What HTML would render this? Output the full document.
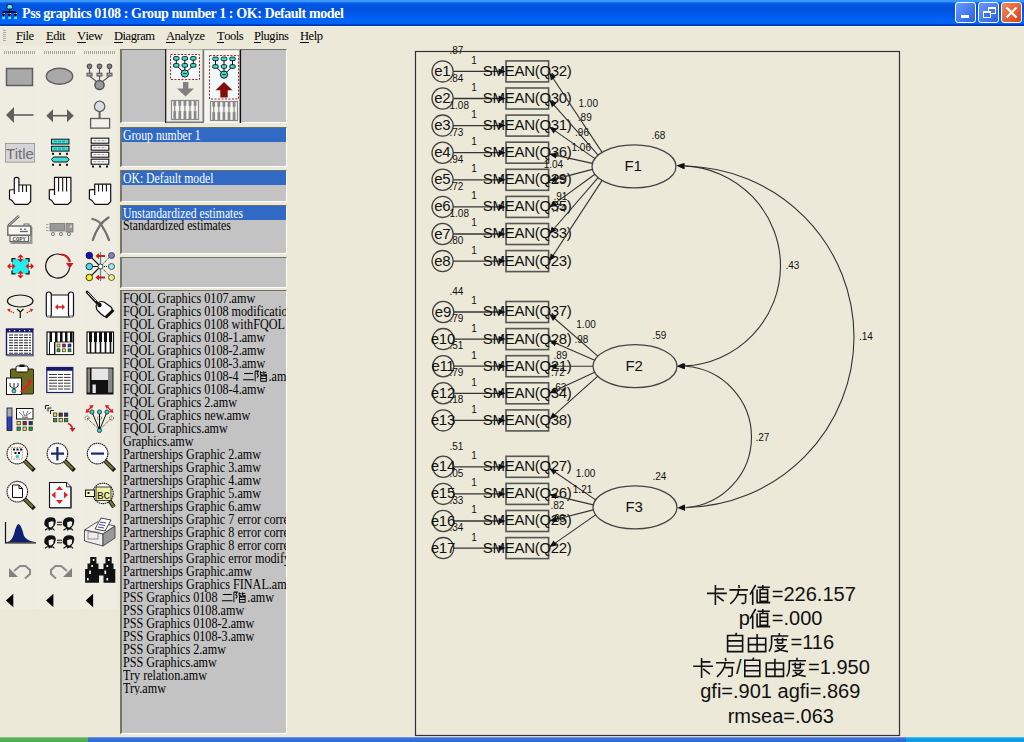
<!DOCTYPE html>
<html><head><meta charset="utf-8"><style>
*{margin:0;padding:0;box-sizing:border-box}
html,body{width:1024px;height:742px;overflow:hidden;background:#ECE9D8;font-family:"Liberation Sans",sans-serif}
.abs{position:absolute}
#title{left:0;top:0;width:1024px;height:26px;background:linear-gradient(#3D9CFF 0px,#3A95FF 1.5px,#0A5FE6 3px,#0055E2 5px,#0053DF 10px,#005AEE 16px,#0066F8 21px,#0062F2 23.5px,#0036B8 25px,#0030A8 26px)}
#title .t{position:absolute;left:22px;top:6px;color:#fff;font:bold 14px "Liberation Serif",serif;white-space:nowrap;letter-spacing:-0.42px}
.wb{position:absolute;top:2px;width:21px;height:21px;border:1px solid #fff;border-radius:3px}
#menu{left:0;top:26px;width:1024px;height:20px;background:linear-gradient(#F2F2FA 0,#F2F2FA 1px,#ECE9D8 1px)}
#menu span{position:absolute;top:3px;font:12.5px "Liberation Serif",serif;color:#000;letter-spacing:-0.45px;line-height:14px}
#menu u{text-decoration:none;border-bottom:1px solid #000;display:inline-block;line-height:12px}
.pnl{position:absolute;left:120px;width:167px;background:#C3C3C3;border-top:1px solid #6e6e62;border-left:2px solid #76766a;border-right:1px solid #fff;border-bottom:1px solid #fff;overflow:hidden}
.hdr{background:#316AC5;color:#fff;height:14px;font:14.3px "Liberation Serif",serif;padding-left:1px;line-height:14px;white-space:nowrap}
.itm{height:14px;font:14.3px "Liberation Serif",serif;padding-left:1px;line-height:11px;white-space:nowrap;color:#000}
.sx{display:inline-block;transform:scaleX(0.82);transform-origin:0 0}
#files .sx{transform:scaleX(0.85)}
#files{font:14.3px "Liberation Serif",serif;line-height:13px;padding-left:1px;padding-top:1px;white-space:nowrap;overflow:hidden}
svg text.big{font:15px "Liberation Sans",sans-serif;fill:#111;letter-spacing:-0.3px}
svg text.sm{font:10px "Liberation Sans",sans-serif;fill:#111}
svg text.st{font:20px "Liberation Sans",sans-serif;fill:#111}
</style></head><body>
<div id="title" class="abs"><svg width="20" height="22" style="position:absolute;left:0;top:0"><rect x="7" y="4.5" width="5.5" height="4.5" rx="1.5" fill="#60e8f0" stroke="#001" stroke-width="0.8"/><path d="M9.7,9 V12 M3.4,12 H15.6 M3.4,12 V18 M9.4,12 V18 M15.4,12 V18" stroke="#001" stroke-width="1.3"/><g fill="#001"><rect x="2" y="12" width="3" height="3"/><rect x="8" y="12" width="3" height="3"/><rect x="14" y="12" width="3" height="3"/></g><g fill="#70e0f8"><rect x="2.2" y="16.5" width="2.8" height="2.6"/><rect x="8.2" y="16.5" width="2.8" height="2.6"/><rect x="14.2" y="16.5" width="2.8" height="2.6"/></g><g fill="#ddd"><rect x="2.5" y="13" width="1" height="1"/><rect x="4" y="13" width="1" height="1"/><rect x="8.5" y="13" width="1" height="1"/><rect x="10" y="13" width="1" height="1"/><rect x="14.5" y="13" width="1" height="1"/><rect x="16" y="13" width="1" height="1"/></g></svg><div class="t">Pss graphics 0108 : Group number 1 : OK: Default model</div>
<div class="wb" style="left:955px;background:linear-gradient(135deg,#6A9BFF,#2A5FE0)"><div style="position:absolute;left:5px;top:12px;width:8px;height:3px;background:#fff"></div></div>
<div class="wb" style="left:978px;background:linear-gradient(135deg,#6A9BFF,#2A5FE0)"><div style="position:absolute;left:9px;top:4px;width:8px;height:7px;border:1px solid #fff;border-top-width:2px"></div><div style="position:absolute;left:4px;top:8px;width:8px;height:7px;border:1px solid #fff;border-top-width:2px;background:#3D70E8"></div></div>
<div class="wb" style="left:1001px;background:linear-gradient(135deg,#F08A5A,#D8421A)"><svg width="19" height="19" style="position:absolute;left:0;top:0"><path d="M4.5,4.5 L14.5,14.5 M14.5,4.5 L4.5,14.5" stroke="#fff" stroke-width="2.2"/></svg></div>
</div>
<div id="menu" class="abs">
<div style="position:absolute;left:3px;top:4px;width:3px;height:12px;background:repeating-linear-gradient(#aaa 0 1px,transparent 1px 2px)"></div>
<span style="left:16px"><u>F</u>ile</span><span style="left:46px"><u>E</u>dit</span><span style="left:77px"><u>V</u>iew</span><span style="left:114px"><u>D</u>iagram</span><span style="left:166px"><u>A</u>nalyze</span><span style="left:217px"><u>T</u>ools</span><span style="left:254px"><u>P</u>lugins</span><span style="left:300px"><u>H</u>elp</span>
</div>
<div class="pnl" style="top:49px;height:74px"></div>
<div class="pnl" style="top:127px;height:40px"><div class="hdr"><span class="sx">Group number 1</span></div></div>
<div class="pnl" style="top:170px;height:32px"><div class="hdr"><span class="sx">OK: Default model</span></div></div>
<div class="pnl" style="top:205px;height:49px"><div class="hdr"><span class="sx">Unstandardized estimates</span></div><div class="itm"><span class="sx">Standardized estimates</span></div></div>
<div class="pnl" style="top:257px;height:31px"></div>
<div class="pnl" style="top:290px;height:444px"><div id="files"><div style="height:13px"><span class="sx">FQOL Graphics 0107.amw</span></div><div style="height:13px"><span class="sx">FQOL Graphics 0108 modificatio</span></div><div style="height:13px"><span class="sx">FQOL Graphics 0108 withFQOL</span></div><div style="height:13px"><span class="sx">FQOL Graphics 0108-1.amw</span></div><div style="height:13px"><span class="sx">FQOL Graphics 0108-2.amw</span></div><div style="height:13px"><span class="sx">FQOL Graphics 0108-3.amw</span></div><div style="height:13px"><span class="sx">FQOL Graphics 0108-4 <svg width="31.5" height="12" style="vertical-align:top;margin-top:0" viewBox="0 0 26.8 12" preserveAspectRatio="none"><path transform="translate(1.2,1.8) scale(0.53,0.48)" d="M1.5,3.5 H18.5 M0,16.5 H20" fill="none" stroke="#000" stroke-width="1.1" vector-effect="non-scaling-stroke" stroke-linecap="butt"/><path transform="translate(12.5,0.6) scale(0.66,0.53)" d="M1,1 V20 M1,1 H6 L4,6 Q7,9 5,12 H3.5 M9,1 V7 Q9,8 12,8 M9,4 H12.5 M14,1 V7 Q14,8 19,8 M14,4.5 L18,3 M9.5,10 H18 V20 H9.5 Z M9.5,15 H18 M13,8.5 L12,10" fill="none" stroke="#000" stroke-width="1.1" vector-effect="non-scaling-stroke" stroke-linecap="butt"/></svg>.am</span></div><div style="height:13px"><span class="sx">FQOL Graphics 0108-4.amw</span></div><div style="height:13px"><span class="sx">FQOL Graphics 2.amw</span></div><div style="height:13px"><span class="sx">FQOL Graphics new.amw</span></div><div style="height:13px"><span class="sx">FQOL Graphics.amw</span></div><div style="height:13px"><span class="sx">Graphics.amw</span></div><div style="height:13px"><span class="sx">Partnerships Graphic 2.amw</span></div><div style="height:13px"><span class="sx">Partnerships Graphic 3.amw</span></div><div style="height:13px"><span class="sx">Partnerships Graphic 4.amw</span></div><div style="height:13px"><span class="sx">Partnerships Graphic 5.amw</span></div><div style="height:13px"><span class="sx">Partnerships Graphic 6.amw</span></div><div style="height:13px"><span class="sx">Partnerships Graphic 7 error corre</span></div><div style="height:13px"><span class="sx">Partnerships Graphic 8 error corre</span></div><div style="height:13px"><span class="sx">Partnerships Graphic 8 error corre</span></div><div style="height:13px"><span class="sx">Partnerships Graphic error modify</span></div><div style="height:13px"><span class="sx">Partnerships Graphic.amw</span></div><div style="height:13px"><span class="sx">Partnerships Graphics FINAL.am</span></div><div style="height:13px"><span class="sx">PSS Graphics 0108 <svg width="31.5" height="12" style="vertical-align:top;margin-top:0" viewBox="0 0 26.8 12" preserveAspectRatio="none"><path transform="translate(1.2,1.8) scale(0.53,0.48)" d="M1.5,3.5 H18.5 M0,16.5 H20" fill="none" stroke="#000" stroke-width="1.1" vector-effect="non-scaling-stroke" stroke-linecap="butt"/><path transform="translate(12.5,0.6) scale(0.66,0.53)" d="M1,1 V20 M1,1 H6 L4,6 Q7,9 5,12 H3.5 M9,1 V7 Q9,8 12,8 M9,4 H12.5 M14,1 V7 Q14,8 19,8 M14,4.5 L18,3 M9.5,10 H18 V20 H9.5 Z M9.5,15 H18 M13,8.5 L12,10" fill="none" stroke="#000" stroke-width="1.1" vector-effect="non-scaling-stroke" stroke-linecap="butt"/></svg>.amw</span></div><div style="height:13px"><span class="sx">PSS Graphics 0108.amw</span></div><div style="height:13px"><span class="sx">PSS Graphics 0108-2.amw</span></div><div style="height:13px"><span class="sx">PSS Graphics 0108-3.amw</span></div><div style="height:13px"><span class="sx">PSS Graphics 2.amw</span></div><div style="height:13px"><span class="sx">PSS Graphics.amw</span></div><div style="height:13px"><span class="sx">Try relation.amw</span></div><div style="height:13px"><span class="sx">Try.amw</span></div></div></div>
<svg class="abs" style="left:0;top:0" width="1024" height="742" viewBox="0 0 1024 742">
<rect x="415.5" y="51.5" width="484" height="684" fill="none" stroke="#333" stroke-width="1.2"/>
<circle cx="442.6" cy="71.4" r="10.6" fill="none" stroke="#444" stroke-width="1.3"/>
<text x="442.3" y="75.9" class="big" text-anchor="middle">e1</text>
<line x1="453.20000000000005" y1="71.4" x2="499" y2="71.4" stroke="#333" stroke-width="1.3"/>
<rect x="506" y="60.9" width="42.6" height="21" fill="none" stroke="#555" stroke-width="1.6"/>
<text x="527.2" y="75.8" class="big" text-anchor="middle">SMEAN(Q32)</text>
<polygon points="505.8,71.4 498.6,74.4 498.6,68.4" fill="#111"/>
<text x="474" y="63.8" class="sm" text-anchor="middle">1</text>
<text x="449.5" y="54.4" class="sm">.87</text>
<circle cx="442.6" cy="98.5" r="10.6" fill="none" stroke="#444" stroke-width="1.3"/>
<text x="442.3" y="103.0" class="big" text-anchor="middle">e2</text>
<line x1="453.20000000000005" y1="98.5" x2="499" y2="98.5" stroke="#333" stroke-width="1.3"/>
<rect x="506" y="88.0" width="42.6" height="21" fill="none" stroke="#555" stroke-width="1.6"/>
<text x="527.2" y="102.9" class="big" text-anchor="middle">SMEAN(Q30)</text>
<polygon points="505.8,98.5 498.6,101.5 498.6,95.5" fill="#111"/>
<text x="474" y="90.9" class="sm" text-anchor="middle">1</text>
<text x="449.5" y="81.5" class="sm">.84</text>
<circle cx="442.6" cy="125.6" r="10.6" fill="none" stroke="#444" stroke-width="1.3"/>
<text x="442.3" y="130.1" class="big" text-anchor="middle">e3</text>
<line x1="453.20000000000005" y1="125.6" x2="499" y2="125.6" stroke="#333" stroke-width="1.3"/>
<rect x="506" y="115.1" width="42.6" height="21" fill="none" stroke="#555" stroke-width="1.6"/>
<text x="527.2" y="130.0" class="big" text-anchor="middle">SMEAN(Q31)</text>
<polygon points="505.8,125.6 498.6,128.6 498.6,122.6" fill="#111"/>
<text x="474" y="118.0" class="sm" text-anchor="middle">1</text>
<text x="449.5" y="108.6" class="sm">1.08</text>
<circle cx="442.6" cy="152.7" r="10.6" fill="none" stroke="#444" stroke-width="1.3"/>
<text x="442.3" y="157.2" class="big" text-anchor="middle">e4</text>
<line x1="453.20000000000005" y1="152.7" x2="499" y2="152.7" stroke="#333" stroke-width="1.3"/>
<rect x="506" y="142.2" width="42.6" height="21" fill="none" stroke="#555" stroke-width="1.6"/>
<text x="527.2" y="157.1" class="big" text-anchor="middle">SMEAN(Q36)</text>
<polygon points="505.8,152.7 498.6,155.7 498.6,149.7" fill="#111"/>
<text x="474" y="145.1" class="sm" text-anchor="middle">1</text>
<text x="449.5" y="135.7" class="sm">.73</text>
<circle cx="442.6" cy="179.8" r="10.6" fill="none" stroke="#444" stroke-width="1.3"/>
<text x="442.3" y="184.3" class="big" text-anchor="middle">e5</text>
<line x1="453.20000000000005" y1="179.8" x2="499" y2="179.8" stroke="#333" stroke-width="1.3"/>
<rect x="506" y="169.3" width="42.6" height="21" fill="none" stroke="#555" stroke-width="1.6"/>
<text x="527.2" y="184.2" class="big" text-anchor="middle">SMEAN(Q29)</text>
<polygon points="505.8,179.8 498.6,182.8 498.6,176.8" fill="#111"/>
<text x="474" y="172.2" class="sm" text-anchor="middle">1</text>
<text x="449.5" y="162.8" class="sm">.94</text>
<circle cx="442.6" cy="206.9" r="10.6" fill="none" stroke="#444" stroke-width="1.3"/>
<text x="442.3" y="211.4" class="big" text-anchor="middle">e6</text>
<line x1="453.20000000000005" y1="206.9" x2="499" y2="206.9" stroke="#333" stroke-width="1.3"/>
<rect x="506" y="196.4" width="42.6" height="21" fill="none" stroke="#555" stroke-width="1.6"/>
<text x="527.2" y="211.3" class="big" text-anchor="middle">SMEAN(Q35)</text>
<polygon points="505.8,206.9 498.6,209.9 498.6,203.9" fill="#111"/>
<text x="474" y="199.3" class="sm" text-anchor="middle">1</text>
<text x="449.5" y="189.9" class="sm">.72</text>
<circle cx="442.6" cy="234.0" r="10.6" fill="none" stroke="#444" stroke-width="1.3"/>
<text x="442.3" y="238.5" class="big" text-anchor="middle">e7</text>
<line x1="453.20000000000005" y1="234.0" x2="499" y2="234.0" stroke="#333" stroke-width="1.3"/>
<rect x="506" y="223.5" width="42.6" height="21" fill="none" stroke="#555" stroke-width="1.6"/>
<text x="527.2" y="238.4" class="big" text-anchor="middle">SMEAN(Q33)</text>
<polygon points="505.8,234.0 498.6,237.0 498.6,231.0" fill="#111"/>
<text x="474" y="226.4" class="sm" text-anchor="middle">1</text>
<text x="449.5" y="217.0" class="sm">1.08</text>
<circle cx="442.6" cy="261.1" r="10.6" fill="none" stroke="#444" stroke-width="1.3"/>
<text x="442.3" y="265.6" class="big" text-anchor="middle">e8</text>
<line x1="453.20000000000005" y1="261.1" x2="499" y2="261.1" stroke="#333" stroke-width="1.3"/>
<rect x="506" y="250.6" width="42.6" height="21" fill="none" stroke="#555" stroke-width="1.6"/>
<text x="527.2" y="265.5" class="big" text-anchor="middle">SMEAN(Q23)</text>
<polygon points="505.8,261.1 498.6,264.1 498.6,258.1" fill="#111"/>
<text x="474" y="253.5" class="sm" text-anchor="middle">1</text>
<text x="449.5" y="244.1" class="sm">.80</text>
<circle cx="443.2" cy="312.0" r="10.6" fill="none" stroke="#444" stroke-width="1.3"/>
<text x="442.9" y="316.5" class="big" text-anchor="middle">e9</text>
<line x1="453.8" y1="312.0" x2="499" y2="312.0" stroke="#333" stroke-width="1.3"/>
<rect x="506" y="301.5" width="42.6" height="21" fill="none" stroke="#555" stroke-width="1.6"/>
<text x="527.2" y="316.4" class="big" text-anchor="middle">SMEAN(Q37)</text>
<polygon points="505.8,312.0 498.6,315.0 498.6,309.0" fill="#111"/>
<text x="474" y="304.4" class="sm" text-anchor="middle">1</text>
<text x="449.5" y="295.0" class="sm">.44</text>
<circle cx="443.2" cy="339.1" r="10.6" fill="none" stroke="#444" stroke-width="1.3"/>
<text x="442.9" y="343.6" class="big" text-anchor="middle">e10</text>
<line x1="453.8" y1="339.1" x2="499" y2="339.1" stroke="#333" stroke-width="1.3"/>
<rect x="506" y="328.6" width="42.6" height="21" fill="none" stroke="#555" stroke-width="1.6"/>
<text x="527.2" y="343.5" class="big" text-anchor="middle">SMEAN(Q28)</text>
<polygon points="505.8,339.1 498.6,342.1 498.6,336.1" fill="#111"/>
<text x="474" y="331.5" class="sm" text-anchor="middle">1</text>
<text x="449.5" y="322.1" class="sm">.79</text>
<circle cx="443.2" cy="366.2" r="10.6" fill="none" stroke="#444" stroke-width="1.3"/>
<text x="442.9" y="370.7" class="big" text-anchor="middle">e11</text>
<line x1="453.8" y1="366.2" x2="499" y2="366.2" stroke="#333" stroke-width="1.3"/>
<rect x="506" y="355.7" width="42.6" height="21" fill="none" stroke="#555" stroke-width="1.6"/>
<text x="527.2" y="370.6" class="big" text-anchor="middle">SMEAN(Q21)</text>
<polygon points="505.8,366.2 498.6,369.2 498.6,363.2" fill="#111"/>
<text x="474" y="358.6" class="sm" text-anchor="middle">1</text>
<text x="449.5" y="349.2" class="sm">.51</text>
<circle cx="443.2" cy="393.3" r="10.6" fill="none" stroke="#444" stroke-width="1.3"/>
<text x="442.9" y="397.8" class="big" text-anchor="middle">e12</text>
<line x1="453.8" y1="393.3" x2="499" y2="393.3" stroke="#333" stroke-width="1.3"/>
<rect x="506" y="382.8" width="42.6" height="21" fill="none" stroke="#555" stroke-width="1.6"/>
<text x="527.2" y="397.7" class="big" text-anchor="middle">SMEAN(Q34)</text>
<polygon points="505.8,393.3 498.6,396.3 498.6,390.3" fill="#111"/>
<text x="474" y="385.7" class="sm" text-anchor="middle">1</text>
<text x="449.5" y="376.3" class="sm">.79</text>
<circle cx="443.2" cy="420.4" r="10.6" fill="none" stroke="#444" stroke-width="1.3"/>
<text x="442.9" y="424.9" class="big" text-anchor="middle">e13</text>
<line x1="453.8" y1="420.4" x2="499" y2="420.4" stroke="#333" stroke-width="1.3"/>
<rect x="506" y="409.9" width="42.6" height="21" fill="none" stroke="#555" stroke-width="1.6"/>
<text x="527.2" y="424.8" class="big" text-anchor="middle">SMEAN(Q38)</text>
<polygon points="505.8,420.4 498.6,423.4 498.6,417.4" fill="#111"/>
<text x="474" y="412.8" class="sm" text-anchor="middle">1</text>
<text x="449.5" y="403.4" class="sm">.18</text>
<circle cx="443.2" cy="466.8" r="10.6" fill="none" stroke="#444" stroke-width="1.3"/>
<text x="442.9" y="471.3" class="big" text-anchor="middle">e14</text>
<line x1="453.8" y1="466.8" x2="499" y2="466.8" stroke="#333" stroke-width="1.3"/>
<rect x="506" y="456.3" width="42.6" height="21" fill="none" stroke="#555" stroke-width="1.6"/>
<text x="527.2" y="471.2" class="big" text-anchor="middle">SMEAN(Q27)</text>
<polygon points="505.8,466.8 498.6,469.8 498.6,463.8" fill="#111"/>
<text x="474" y="459.2" class="sm" text-anchor="middle">1</text>
<text x="449.5" y="449.8" class="sm">.51</text>
<circle cx="443.2" cy="493.9" r="10.6" fill="none" stroke="#444" stroke-width="1.3"/>
<text x="442.9" y="498.4" class="big" text-anchor="middle">e15</text>
<line x1="453.8" y1="493.9" x2="499" y2="493.9" stroke="#333" stroke-width="1.3"/>
<rect x="506" y="483.4" width="42.6" height="21" fill="none" stroke="#555" stroke-width="1.6"/>
<text x="527.2" y="498.3" class="big" text-anchor="middle">SMEAN(Q26)</text>
<polygon points="505.8,493.9 498.6,496.9 498.6,490.9" fill="#111"/>
<text x="474" y="486.3" class="sm" text-anchor="middle">1</text>
<text x="449.5" y="476.9" class="sm">.05</text>
<circle cx="443.2" cy="521.0" r="10.6" fill="none" stroke="#444" stroke-width="1.3"/>
<text x="442.9" y="525.5" class="big" text-anchor="middle">e16</text>
<line x1="453.8" y1="521.0" x2="499" y2="521.0" stroke="#333" stroke-width="1.3"/>
<rect x="506" y="510.5" width="42.6" height="21" fill="none" stroke="#555" stroke-width="1.6"/>
<text x="527.2" y="525.4" class="big" text-anchor="middle">SMEAN(Q25)</text>
<polygon points="505.8,521.0 498.6,524.0 498.6,518.0" fill="#111"/>
<text x="474" y="513.4" class="sm" text-anchor="middle">1</text>
<text x="449.5" y="504.0" class="sm">.33</text>
<circle cx="443.2" cy="548.1" r="10.6" fill="none" stroke="#444" stroke-width="1.3"/>
<text x="442.9" y="552.6" class="big" text-anchor="middle">e17</text>
<line x1="453.8" y1="548.1" x2="499" y2="548.1" stroke="#333" stroke-width="1.3"/>
<rect x="506" y="537.6" width="42.6" height="21" fill="none" stroke="#555" stroke-width="1.6"/>
<text x="527.2" y="552.5" class="big" text-anchor="middle">SMEAN(Q22)</text>
<polygon points="505.8,548.1 498.6,551.1 498.6,545.1" fill="#111"/>
<text x="474" y="540.5" class="sm" text-anchor="middle">1</text>
<text x="449.5" y="531.1" class="sm">.34</text>
<ellipse cx="634" cy="166.4" rx="42" ry="21.5" fill="none" stroke="#444" stroke-width="1.3"/>
<text x="633" y="170.9" class="big" text-anchor="middle">F1</text>
<text x="651.5" y="139.4" class="sm">.68</text>
<ellipse cx="635" cy="366.2" rx="42" ry="21.5" fill="none" stroke="#444" stroke-width="1.3"/>
<text x="634" y="370.7" class="big" text-anchor="middle">F2</text>
<text x="652.5" y="339.2" class="sm">.59</text>
<ellipse cx="635" cy="507.4" rx="42" ry="21.5" fill="none" stroke="#444" stroke-width="1.3"/>
<text x="634" y="511.9" class="big" text-anchor="middle">F3</text>
<text x="652.5" y="480.4" class="sm">.24</text>
<line x1="602.1" y1="152.4" x2="549.4" y2="72.7" stroke="#333" stroke-width="1.1"/>
<polygon points="549.4,72.7 555.9,77.0 550.9,80.4" fill="#111"/>
<line x1="598.1" y1="155.2" x2="549.4" y2="99.8" stroke="#333" stroke-width="1.1"/>
<polygon points="549.4,99.8 556.4,103.2 551.9,107.2" fill="#111"/>
<line x1="594.9" y1="158.6" x2="549.4" y2="126.9" stroke="#333" stroke-width="1.1"/>
<polygon points="549.4,126.9 557.0,128.6 553.6,133.5" fill="#111"/>
<line x1="592.4" y1="163.4" x2="549.4" y2="153.9" stroke="#333" stroke-width="1.1"/>
<polygon points="549.4,153.9 557.1,152.5 555.8,158.4" fill="#111"/>
<line x1="592.4" y1="169.4" x2="549.4" y2="180.6" stroke="#333" stroke-width="1.1"/>
<polygon points="549.4,180.6 555.6,175.9 557.1,181.7" fill="#111"/>
<line x1="594.9" y1="174.2" x2="549.4" y2="207.4" stroke="#333" stroke-width="1.1"/>
<polygon points="549.4,207.4 553.4,200.7 557.0,205.6" fill="#111"/>
<line x1="598.1" y1="177.6" x2="549.4" y2="234.0" stroke="#333" stroke-width="1.1"/>
<polygon points="549.4,234.0 551.8,226.6 556.4,230.5" fill="#111"/>
<line x1="602.1" y1="180.4" x2="549.4" y2="261.1" stroke="#333" stroke-width="1.1"/>
<polygon points="549.4,261.1 550.8,253.4 555.8,256.7" fill="#111"/>
<line x1="597.8" y1="356.2" x2="549.4" y2="314.0" stroke="#333" stroke-width="1.1"/>
<polygon points="549.4,314.0 556.8,316.5 552.9,321.0" fill="#111"/>
<line x1="594.7" y1="360.2" x2="549.4" y2="340.6" stroke="#333" stroke-width="1.1"/>
<polygon points="549.4,340.6 557.2,340.7 554.8,346.2" fill="#111"/>
<line x1="593.0" y1="366.2" x2="549.4" y2="366.2" stroke="#333" stroke-width="1.1"/>
<polygon points="549.4,366.2 556.6,363.2 556.6,369.2" fill="#111"/>
<line x1="594.7" y1="372.2" x2="549.4" y2="393.3" stroke="#333" stroke-width="1.1"/>
<polygon points="549.4,393.3 554.7,387.5 557.2,393.0" fill="#111"/>
<line x1="597.8" y1="376.2" x2="549.4" y2="419.4" stroke="#333" stroke-width="1.1"/>
<polygon points="549.4,419.4 552.8,412.4 556.8,416.8" fill="#111"/>
<line x1="595.6" y1="499.9" x2="549.4" y2="468.3" stroke="#333" stroke-width="1.1"/>
<polygon points="549.4,468.3 557.0,469.9 553.7,474.8" fill="#111"/>
<line x1="593.3" y1="504.9" x2="549.4" y2="494.4" stroke="#333" stroke-width="1.1"/>
<polygon points="549.4,494.4 557.1,493.2 555.7,499.0" fill="#111"/>
<line x1="593.3" y1="509.9" x2="549.4" y2="521.0" stroke="#333" stroke-width="1.1"/>
<polygon points="549.4,521.0 555.6,516.3 557.1,522.1" fill="#111"/>
<line x1="595.6" y1="514.9" x2="549.4" y2="547.1" stroke="#333" stroke-width="1.1"/>
<polygon points="549.4,547.1 553.6,540.5 557.0,545.4" fill="#111"/>
<text x="578.5" y="106.5" class="sm">1.00</text>
<text x="577.8" y="120.8" class="sm">.89</text>
<text x="575.1" y="135.6" class="sm">.96</text>
<text x="571.5" y="150.6" class="sm">1.06</text>
<text x="543.7" y="167.5" class="sm">1.04</text>
<text x="545.5" y="183" class="sm">1.25</text>
<text x="553.4" y="200.3" class="sm">.91</text>
<text x="552.1" y="212.4" class="sm">.74</text>
<text x="576.3" y="328" class="sm">1.00</text>
<text x="574.5" y="342.9" class="sm">.98</text>
<text x="553.5" y="358.7" class="sm">.89</text>
<text x="550.9" y="376.2" class="sm">.72</text>
<text x="552.5" y="391" class="sm">.63</text>
<text x="575.8" y="476.7" class="sm">1.00</text>
<text x="572.8" y="493" class="sm">1.21</text>
<text x="550.5" y="508.5" class="sm">.82</text>
<text x="551.5" y="522" class="sm">.93</text>
<path d="M780.5,265.9 A100.4,100.4 0 0 0 684.5,165.9" fill="none" stroke="#333" stroke-width="1.1"/>
<path d="M780.5,265.9 A100.4,100.4 0 0 1 684.5,365.9" fill="none" stroke="#333" stroke-width="1.1"/>
<polygon points="676.5,165.6 683.8,162.9 683.6,168.9" fill="#111"/>
<polygon points="676.5,366.2 683.6,362.9 683.8,368.9" fill="#111"/>
<path d="M854.0,336.9 A171.0,171.0 0 0 0 685.5,166.3" fill="none" stroke="#333" stroke-width="1.1"/>
<path d="M854.0,336.9 A171.0,171.0 0 0 1 685.5,507.5" fill="none" stroke="#333" stroke-width="1.1"/>
<polygon points="677.5,166.0 684.8,163.3 684.6,169.3" fill="#111"/>
<polygon points="677.5,507.8 684.6,504.5 684.8,510.5" fill="#111"/>
<path d="M751.5,437.0 A71.0,71.0 0 0 0 685.8,366.3" fill="none" stroke="#333" stroke-width="1.1"/>
<path d="M751.5,437.0 A71.0,71.0 0 0 1 685.8,507.7" fill="none" stroke="#333" stroke-width="1.1"/>
<polygon points="677.8,366.0 685.1,363.3 684.9,369.3" fill="#111"/>
<polygon points="677.8,508.0 684.9,504.7 685.1,510.7" fill="#111"/>
<text x="785.5" y="268.7" class="sm">.43</text>
<text x="858.9" y="339.9" class="sm">.14</text>
<text x="755.4" y="440.9" class="sm">.27</text>
<path transform="translate(707,584.8) scale(1.0,1.0)" d="M8.4,0.3 V20.3 M8.4,4.2 H17.2 M0,8.6 H19.8 M10,11.2 L16.7,16.4" fill="none" stroke="#111" stroke-width="1.6" vector-effect="non-scaling-stroke" stroke-linecap="butt"/>
<path transform="translate(729.4,584.8) scale(1.0,1.0)" d="M9.4,0.2 L9.9,3.4 M0,5.1 H18.5 M9.2,5.1 Q9,12 0.9,19.1 M8.8,9.9 H16.3 Q16.3,15 16,17.6 Q15.6,19 12,18.4" fill="none" stroke="#111" stroke-width="1.6" vector-effect="non-scaling-stroke" stroke-linecap="butt"/>
<path transform="translate(749.5,584.8) scale(1.0,1.0)" d="M6.2,0.2 L0.5,9.9 M3.2,6.8 V20.3 M8,2.4 H20.3 M13.3,0.2 V4.5 M10.6,4.7 H18.1 V16.5 H10.6 Z M10.6,8.6 H18.1 M10.6,12.5 H18.1 M7.6,4.7 V17.8 M7,17.8 H20.7" fill="none" stroke="#111" stroke-width="1.6" vector-effect="non-scaling-stroke" stroke-linecap="butt"/>
<text x="771.8" y="600.9" class="st">=226.157</text>
<text x="738.7" y="624.9" class="st">p</text>
<path transform="translate(749.5,608.8) scale(1.0,1.0)" d="M6.2,0.2 L0.5,9.9 M3.2,6.8 V20.3 M8,2.4 H20.3 M13.3,0.2 V4.5 M10.6,4.7 H18.1 V16.5 H10.6 Z M10.6,8.6 H18.1 M10.6,12.5 H18.1 M7.6,4.7 V17.8 M7,17.8 H20.7" fill="none" stroke="#111" stroke-width="1.6" vector-effect="non-scaling-stroke" stroke-linecap="butt"/>
<text x="771.8" y="624.9" class="st">=.000</text>
<path transform="translate(727.6,632.7) scale(1.0,1.0)" d="M8.9,0.1 L8,2.8 M0,2.8 H15 V18.9 H0 Z M0,8.2 H15 M0,13.3 H15" fill="none" stroke="#111" stroke-width="1.6" vector-effect="non-scaling-stroke" stroke-linecap="butt"/>
<path transform="translate(748.5,632.7) scale(1.0,1.0)" d="M0,5.5 H17.2 V18.9 H0 Z M8.6,1.2 V18.9 M0,11.9 H17.2" fill="none" stroke="#111" stroke-width="1.6" vector-effect="non-scaling-stroke" stroke-linecap="butt"/>
<path transform="translate(769,632.7) scale(1.0,1.0)" d="M10.3,0.3 V2.6 M2,3.3 H19.3 M2.6,3.3 V11 Q2.4,16 0,18.9 M5,7 H18 M8.5,5 V10.5 M13.6,5 V10.5 M8.5,10.5 H13.6 M6,13 H16 Q13,17.5 5.5,18.9 M8.2,14.6 Q12,18 19,18.9" fill="none" stroke="#111" stroke-width="1.6" vector-effect="non-scaling-stroke" stroke-linecap="butt"/>
<text x="790.5" y="649.0" class="st">=116</text>
<path transform="translate(693.2,657.6999999999999) scale(1.0,1.0)" d="M8.4,0.3 V20.3 M8.4,4.2 H17.2 M0,8.6 H19.8 M10,11.2 L16.7,16.4" fill="none" stroke="#111" stroke-width="1.6" vector-effect="non-scaling-stroke" stroke-linecap="butt"/>
<path transform="translate(716.0,657.6999999999999) scale(1.0,1.0)" d="M9.4,0.2 L9.9,3.4 M0,5.1 H18.5 M9.2,5.1 Q9,12 0.9,19.1 M8.8,9.9 H16.3 Q16.3,15 16,17.6 Q15.6,19 12,18.4" fill="none" stroke="#111" stroke-width="1.6" vector-effect="non-scaling-stroke" stroke-linecap="butt"/>
<text x="736" y="673.8" class="st">/</text>
<path transform="translate(744.8,657.5) scale(1.0,1.0)" d="M8.9,0.1 L8,2.8 M0,2.8 H15 V18.9 H0 Z M0,8.2 H15 M0,13.3 H15" fill="none" stroke="#111" stroke-width="1.6" vector-effect="non-scaling-stroke" stroke-linecap="butt"/>
<path transform="translate(766.3,657.5) scale(1.0,1.0)" d="M0,5.5 H17.2 V18.9 H0 Z M8.6,1.2 V18.9 M0,11.9 H17.2" fill="none" stroke="#111" stroke-width="1.6" vector-effect="non-scaling-stroke" stroke-linecap="butt"/>
<path transform="translate(786.7,657.5) scale(1.0,1.0)" d="M10.3,0.3 V2.6 M2,3.3 H19.3 M2.6,3.3 V11 Q2.4,16 0,18.9 M5,7 H18 M8.5,5 V10.5 M13.6,5 V10.5 M8.5,10.5 H13.6 M6,13 H16 Q13,17.5 5.5,18.9 M8.2,14.6 Q12,18 19,18.9" fill="none" stroke="#111" stroke-width="1.6" vector-effect="non-scaling-stroke" stroke-linecap="butt"/>
<text x="808.1" y="673.8" class="st">=1.950</text>
<text x="780.3" y="698.0" class="st" text-anchor="middle">gfi=.901 agfi=.869</text>
<text x="780.8" y="722.8" class="st" text-anchor="middle">rmsea=.063</text>
<rect x="0" y="46" width="117" height="563" fill="#efede2"/>
<line x1="4" y1="52.5" x2="35" y2="52.5" stroke="#aaa693" stroke-width="3" stroke-dasharray="1 1"/>
<line x1="44" y1="52.5" x2="75" y2="52.5" stroke="#aaa693" stroke-width="3" stroke-dasharray="1 1"/>
<line x1="84" y1="52.5" x2="115" y2="52.5" stroke="#aaa693" stroke-width="3" stroke-dasharray="1 1"/>
<rect x="39" y="56" width="1" height="553" fill="#f1efe4"/>
<rect x="80" y="56" width="1" height="553" fill="#f1efe4"/>
<rect x="6.5" y="68.5" width="26" height="17" fill="#a9a9a9" stroke="#5e5e5e" stroke-width="1.5"/>
<ellipse cx="59.5" cy="76.3" rx="13.2" ry="8" fill="#a9a9a9" stroke="#5e5e5e" stroke-width="1.4"/>
<circle cx="89.5" cy="66.3" r="2.2" fill="#888" stroke="#555" stroke-width="1.2"/>
<line x1="89.5" y1="68" x2="89.5" y2="73" stroke="#555" stroke-width="1.2"/>
<rect x="87.0" y="73.2" width="5" height="2.8" fill="#aaa" stroke="#555" stroke-width="1"/>
<line x1="89.5" y1="76" x2="99.5" y2="84" stroke="#555" stroke-width="1.1"/>
<circle cx="99.5" cy="66.3" r="2.2" fill="#888" stroke="#555" stroke-width="1.2"/>
<line x1="99.5" y1="68" x2="99.5" y2="73" stroke="#555" stroke-width="1.2"/>
<rect x="97.0" y="73.2" width="5" height="2.8" fill="#aaa" stroke="#555" stroke-width="1"/>
<line x1="99.5" y1="76" x2="99.5" y2="84" stroke="#555" stroke-width="1.1"/>
<circle cx="109.5" cy="66.3" r="2.2" fill="#888" stroke="#555" stroke-width="1.2"/>
<line x1="109.5" y1="68" x2="109.5" y2="73" stroke="#555" stroke-width="1.2"/>
<rect x="107.0" y="73.2" width="5" height="2.8" fill="#aaa" stroke="#555" stroke-width="1"/>
<line x1="109.5" y1="76" x2="99.5" y2="84" stroke="#555" stroke-width="1.1"/>
<circle cx="99.5" cy="85" r="4.6" fill="#999" stroke="#555" stroke-width="1.5"/>
<polygon points="6,115 14,107 14,123" fill="#5e5e5e"/><line x1="13" y1="115" x2="33.5" y2="115" stroke="#5e5e5e" stroke-width="1.6"/>
<polygon points="46.3,115.7 53,109.3 53,122.2" fill="#5e5e5e"/><polygon points="73.8,115.7 67,109.3 67,122.2" fill="#5e5e5e"/><line x1="52" y1="115.7" x2="68" y2="115.7" stroke="#5e5e5e" stroke-width="1.6"/>
<circle cx="99.6" cy="106.4" r="5.2" fill="#dcdce6" stroke="#5e5e5e" stroke-width="1.3"/><line x1="99.6" y1="111.5" x2="99.6" y2="118.5" stroke="#5e5e5e" stroke-width="2"/><rect x="90.6" y="118.5" width="19" height="9.6" fill="#f2f0e8" stroke="#5e5e5e" stroke-width="1.3"/>
<rect x="5.5" y="143.5" width="29" height="18.7" fill="#d6d6d6" stroke="#a0a0a0" stroke-width="1"/><text x="20" y="159" text-anchor="middle" style="font:15px 'Liberation Sans',sans-serif;fill:#707070">Title</text>
<rect x="51.5" y="139.2" width="17.5" height="4.8" fill="#3ee0d8" stroke="#111" stroke-width="1"/><line x1="54" y1="141.6" x2="66.5" y2="141.6" stroke="#1a8080" stroke-width="0.8" stroke-dasharray="3 1"/>
<rect x="51.5" y="146.3" width="17.5" height="4.8" fill="#3ee0d8" stroke="#111" stroke-width="1"/><line x1="54" y1="148.70000000000002" x2="66.5" y2="148.70000000000002" stroke="#1a8080" stroke-width="0.8" stroke-dasharray="3 1"/>
<rect x="52" y="152.8" width="2" height="2" fill="#111"/>
<rect x="59" y="152.8" width="2" height="2" fill="#111"/>
<rect x="66" y="152.8" width="2" height="2" fill="#111"/>
<rect x="52" y="163.8" width="2" height="2" fill="#111"/>
<rect x="59" y="163.8" width="2" height="2" fill="#111"/>
<rect x="66" y="163.8" width="2" height="2" fill="#111"/>
<polygon points="51.5,159.5 53.5,157 67,157 69,159.5 67,162 53.5,162" fill="#3ee0d8" stroke="#111" stroke-width="1"/>
<rect x="91.2" y="138.2" width="17.6" height="5" fill="#fff" stroke="#111" stroke-width="1.1"/><line x1="93.5" y1="140.7" x2="106.5" y2="140.7" stroke="#777" stroke-width="0.8" stroke-dasharray="3 1"/>
<rect x="91.2" y="145.2" width="17.6" height="5" fill="#fff" stroke="#111" stroke-width="1.1"/><line x1="93.5" y1="147.7" x2="106.5" y2="147.7" stroke="#777" stroke-width="0.8" stroke-dasharray="3 1"/>
<rect x="91.2" y="152.2" width="17.6" height="5" fill="#fff" stroke="#111" stroke-width="1.1"/><line x1="93.5" y1="154.7" x2="106.5" y2="154.7" stroke="#777" stroke-width="0.8" stroke-dasharray="3 1"/>
<rect x="91.2" y="159.2" width="17.6" height="5" fill="#fff" stroke="#111" stroke-width="1.1"/><line x1="93.5" y1="161.7" x2="106.5" y2="161.7" stroke="#777" stroke-width="0.8" stroke-dasharray="3 1"/>
<rect x="92" y="165.5" width="2" height="2" fill="#111"/>
<rect x="99" y="165.5" width="2" height="2" fill="#111"/>
<rect x="106" y="165.5" width="2" height="2" fill="#111"/>
<path d="M14.3,194 V178.3 Q16.6,176.4 18.9,178.3 V185 H30.7 V201.5 L27.8,204.3 H15 L12.2,200.8 L9.5,199 V190 L14.3,189.5" fill="#fff" stroke="#111" stroke-width="1.2" stroke-linejoin="round"/><path d="M18.9,185 V192 M22.6,185 V192 M26.4,185 V192" stroke="#111" stroke-width="1.1"/>
<path d="M54.5,195 V177.3 H70.9 V201.5 L67.9,204.4 H54.5 L51.7,200.5 L49.3,198.9 V189.8 L54.5,189.3" fill="#fff" stroke="#111" stroke-width="1.2" stroke-linejoin="round"/><path d="M58.6,177.3 V191.5 M62.7,177.3 V191.5 M66.6,177.3 V191.5" stroke="#111" stroke-width="1.1"/>
<path d="M94.7,195 V184.2 H110.7 V201.5 L107.9,204.4 H95 L92,200.5 L89.4,198.9 V189.8 L94.7,189.3" fill="#fff" stroke="#111" stroke-width="1.2" stroke-linejoin="round"/><path d="M98.6,184.2 V191.5 M102.5,184.2 V191.5 M106.4,184.2 V191.5" stroke="#111" stroke-width="1.1"/>
<path d="M8.5,225.5 L19,216" stroke="#666" stroke-width="2.6"/><path d="M8.5,225.5 L19,216" stroke="#ddd" stroke-width="0.8"/>
<rect x="30" y="227" width="2.5" height="17" fill="#9a9a9a"/><rect x="10.5" y="241.5" width="20" height="2.5" fill="#9a9a9a"/>
<rect x="24" y="224" width="5" height="2.5" fill="#fff" stroke="#666" stroke-width="1"/>
<rect x="7.8" y="226" width="23" height="9.2" fill="#f8f8f4" stroke="#666" stroke-width="1.4"/><rect x="20" y="228.5" width="2" height="1.5" fill="#777"/><rect x="24" y="228.5" width="2" height="1.5" fill="#777"/><line x1="20" y1="231.5" x2="28" y2="231.5" stroke="#666" stroke-width="1.3"/>
<rect x="10" y="235.5" width="18.5" height="6" fill="#f8f8f4" stroke="#666" stroke-width="1.2"/><text x="19.2" y="240.7" text-anchor="middle" style="font:bold 5.5px 'Liberation Mono',monospace;fill:#555">COPY</text>
<rect x="50" y="223.5" width="14.5" height="7.5" fill="#9a9a9a" stroke="#777" stroke-width="0.8"/><rect x="66" y="223.5" width="7" height="8.5" fill="#9a9a9a" stroke="#777" stroke-width="0.8"/><rect x="70" y="225.5" width="2" height="2" fill="#ddd"/>
<circle cx="53" cy="234" r="1.6" fill="#eee" stroke="#777" stroke-width="1"/>
<circle cx="61" cy="234" r="1.6" fill="#eee" stroke="#777" stroke-width="1"/>
<circle cx="69" cy="234" r="1.6" fill="#eee" stroke="#777" stroke-width="1"/>
<line x1="46" y1="224.5" x2="48.5" y2="224.5" stroke="#999" stroke-width="0.9"/>
<line x1="46" y1="227.5" x2="48.5" y2="227.5" stroke="#999" stroke-width="0.9"/>
<line x1="46" y1="230.5" x2="48.5" y2="230.5" stroke="#999" stroke-width="0.9"/>
<path d="M92.5,219 Q99,220.5 101.5,225 Q106,232 109,240 M108.5,217.5 Q103,221 99.5,226 Q95,233 92.8,240" fill="none" stroke="#707070" stroke-width="2.3" stroke-linecap="round"/>
<rect x="12" y="258.7" width="17" height="15.2" fill="#22eeee"/><path d="M12,262 V258.7 H15.5 M25.5,258.7 H29 V262 M29,270.5 V273.9 H25.5 M15.5,273.9 H12 V270.5" fill="none" stroke="#111" stroke-width="1.3"/>
<g fill="#d81818"><polygon points="20.5,254.3 17.3,257.6 23.7,257.6"/><rect x="19.9" y="257" width="1.2" height="2"/><polygon points="17.5,258.9 23.5,258.9 20.5,262.2"/><polygon points="20.5,278.5 17.3,275.2 23.7,275.2"/><rect x="19.9" y="273.6" width="1.2" height="2"/><polygon points="17.5,273.7 23.5,273.7 20.5,270.4"/><polygon points="7.1,266.3 10.4,263.1 10.4,269.5"/><rect x="10" y="265.7" width="2" height="1.2"/><polygon points="12.2,263.3 12.2,269.3 15.5,266.3"/><polygon points="34,266.3 30.7,263.1 30.7,269.5"/><rect x="29" y="265.7" width="2" height="1.2"/><polygon points="28.8,263.3 28.8,269.3 25.5,266.3"/></g>
<path d="M61,254.5 A12,12 0 1 0 69.5,268" fill="none" stroke="#111" stroke-width="1.2"/><path d="M61,254.5 Q68,255 70,262" fill="none" stroke="#d01818" stroke-width="2.2"/><polygon points="66,263 73.5,263 69.8,268.5" fill="#d01818"/>
<line x1="100.5" y1="252" x2="100.5" y2="281" stroke="#20a0a0" stroke-width="1.2"/>
<path d="M89.5,255.5 L100.5,266.5 L89.5,277.5 M89.5,266.5 H100.5" stroke="#111" stroke-width="1.1" fill="none"/><path d="M111,255.5 L100.5,266.5 L111,277.5 M111,266.5 H100.5" stroke="#111" stroke-width="1" stroke-dasharray="1 1" fill="none"/>
<circle cx="89.3" cy="255.5" r="3.3" fill="#1010c0" stroke="#111" stroke-width="0.8"/><circle cx="89.3" cy="266.5" r="3.3" fill="#40e0f0" stroke="#111" stroke-width="0.8"/><circle cx="89.3" cy="277.5" r="3.3" fill="#f0f020" stroke="#111" stroke-width="0.8"/>
<circle cx="111.5" cy="255.5" r="3" fill="#8080d0" stroke="#333" stroke-width="0.8"/><circle cx="111.5" cy="266.5" r="3" fill="#a0e8f0" stroke="#333" stroke-width="0.8"/><circle cx="111.5" cy="277.5" r="3" fill="#f0f080" stroke="#333" stroke-width="0.8"/><circle cx="100.5" cy="266.5" r="2.5" fill="#fff" stroke="#111" stroke-width="0.8"/>
<g fill="#d01818"><rect x="98" y="255" width="7" height="2"/><polygon points="95.5,256 99,253 99,259"/><rect x="98" y="276.5" width="7" height="2"/><polygon points="95.5,277.5 99,274.5 99,280.5"/></g>
<ellipse cx="20.2" cy="301" rx="12.8" ry="6" fill="none" stroke="#111" stroke-width="1.2"/><path d="M17,309 L20.3,312 L23.5,309 M20.3,312 V318" stroke="#111" stroke-width="1.2" fill="none"/>
<path d="M14,313 L8,310 M26.5,313 L32.5,310" stroke="#d02020" stroke-width="1.2" stroke-dasharray="1.5 0.8"/><polygon points="7,309.5 10.5,308.5 9.5,312" fill="#d02020"/><polygon points="33.5,309.5 30,308.5 31,312" fill="#d02020"/>
<rect x="50" y="295" width="19.5" height="22" fill="#fafafa" stroke="#111" stroke-width="1"/><rect x="46.3" y="292" width="5" height="25" rx="2.5" fill="#fff" stroke="#111" stroke-width="1.2"/><rect x="68.5" y="292" width="5" height="25" rx="2.5" fill="#fff" stroke="#111" stroke-width="1.2"/><circle cx="48.8" cy="316.5" r="1.6" fill="#aaa"/><circle cx="71" cy="316.5" r="1.6" fill="#aaa"/>
<path d="M57,307 H63" stroke="#e02020" stroke-width="1.6"/><polygon points="55,307 58,304 58,310" fill="#e02020"/><polygon points="65,307 62,304 62,310" fill="#e02020"/>
<path d="M87,292 L98,304" stroke="#111" stroke-width="2.6" stroke-linecap="round"/><path d="M87.5,292.5 L96,301" stroke="#fff" stroke-width="0.8"/><path d="M96,306 Q99,300 104,302 L111,307 Q113.5,310 111,313 L107,317 Q104,317 101,314 L97,310 Z" fill="#fff" stroke="#111" stroke-width="1.2"/><path d="M105.5,317.5 L113.5,310" stroke="#111" stroke-width="3"/><circle cx="99.5" cy="305" r="2.2" fill="#111"/>
<rect x="6.5" y="329" width="26.5" height="26" fill="#fff" stroke="#1a1a6a" stroke-width="1.4"/><rect x="6.5" y="329" width="26.5" height="3.5" fill="#1a1a6a"/>
<rect x="9" y="330" width="1.2" height="1.3" fill="#fff"/>
<rect x="14" y="330" width="1.2" height="1.3" fill="#fff"/>
<rect x="19" y="330" width="1.2" height="1.3" fill="#fff"/>
<rect x="24" y="330" width="1.2" height="1.3" fill="#fff"/>
<rect x="29" y="330" width="1.2" height="1.3" fill="#fff"/>
<line x1="9" y1="335.0" x2="31" y2="335.0" stroke="#222" stroke-width="1" stroke-dasharray="4 1"/>
<line x1="9" y1="337.6" x2="31" y2="337.6" stroke="#222" stroke-width="1" stroke-dasharray="4 1"/>
<line x1="9" y1="340.2" x2="31" y2="340.2" stroke="#222" stroke-width="1" stroke-dasharray="4 1"/>
<line x1="9" y1="342.8" x2="31" y2="342.8" stroke="#222" stroke-width="1" stroke-dasharray="4 1"/>
<line x1="9" y1="345.4" x2="31" y2="345.4" stroke="#222" stroke-width="1" stroke-dasharray="4 1"/>
<line x1="9" y1="348.0" x2="31" y2="348.0" stroke="#222" stroke-width="1" stroke-dasharray="4 1"/>
<line x1="9" y1="350.6" x2="31" y2="350.6" stroke="#222" stroke-width="1" stroke-dasharray="4 1"/>
<line x1="9" y1="353.2" x2="31" y2="353.2" stroke="#222" stroke-width="1" stroke-dasharray="4 1"/>
<rect x="33" y="330" width="1" height="26" fill="#888"/><rect x="7" y="355.5" width="27" height="1" fill="#888"/>
<rect x="47" y="332" width="26.5" height="22.5" fill="#fff" stroke="#111" stroke-width="1.2"/>
<rect x="49.5" y="332" width="2.5" height="10" fill="#111"/>
<rect x="55" y="332" width="2.5" height="10" fill="#111"/>
<rect x="60" y="332" width="2.5" height="10" fill="#111"/>
<rect x="65" y="332" width="2.5" height="10" fill="#111"/>
<rect x="70" y="332" width="2.5" height="10" fill="#111"/>
<line x1="49.5" y1="342" x2="49.5" y2="354" stroke="#111" stroke-width="1"/>
<line x1="54.5" y1="342" x2="54.5" y2="354" stroke="#111" stroke-width="1"/>
<line x1="59.5" y1="342" x2="59.5" y2="354" stroke="#111" stroke-width="1"/>
<line x1="64.5" y1="342" x2="64.5" y2="354" stroke="#111" stroke-width="1"/>
<line x1="69.5" y1="342" x2="69.5" y2="354" stroke="#111" stroke-width="1"/>
<rect x="55" y="342" width="18.5" height="12.5" fill="#fff" stroke="#111" stroke-width="0.8"/>
<rect x="57.0" y="344.0" width="3" height="3" fill="#e0e040" stroke="#222" stroke-width="0.6"/>
<rect x="62.5" y="344.0" width="3" height="3" fill="#a02060" stroke="#222" stroke-width="0.6"/>
<rect x="68.0" y="344.0" width="3" height="3" fill="#2040a0" stroke="#222" stroke-width="0.6"/>
<rect x="57.0" y="348.8" width="3" height="3" fill="#20a040" stroke="#222" stroke-width="0.6"/>
<rect x="62.5" y="348.8" width="3" height="3" fill="#e0e040" stroke="#222" stroke-width="0.6"/>
<rect x="68.0" y="348.8" width="3" height="3" fill="#20a040" stroke="#222" stroke-width="0.6"/>
<rect x="87" y="332" width="26.5" height="21" fill="#fff" stroke="#111" stroke-width="1.2"/>
<rect x="89" y="332" width="3" height="10" fill="#111"/><rect x="89.7" y="342" width="1.6" height="11" fill="#111"/>
<rect x="94" y="332" width="3" height="10" fill="#111"/><rect x="94.7" y="342" width="1.6" height="11" fill="#111"/>
<rect x="99" y="332" width="3" height="10" fill="#111"/><rect x="99.7" y="342" width="1.6" height="11" fill="#111"/>
<rect x="104" y="332" width="3" height="10" fill="#111"/><rect x="104.7" y="342" width="1.6" height="11" fill="#111"/>
<rect x="109" y="332" width="3" height="10" fill="#111"/><rect x="109.7" y="342" width="1.6" height="11" fill="#111"/>
<rect x="10.5" y="369" width="23" height="25" rx="1" fill="#6b6b20" stroke="#222" stroke-width="1"/><rect x="16" y="366" width="12" height="6" rx="1.5" fill="#fff" stroke="#111" stroke-width="1"/><rect x="19.5" y="364.5" width="5" height="2.5" fill="#111"/>
<rect x="6.5" y="378" width="15" height="16.5" fill="#fff" stroke="#111" stroke-width="1"/><circle cx="14" cy="391" r="2" fill="#40d0d0" stroke="#111" stroke-width="0.6"/><path d="M10,383 V386 L14,389 L18,386 V383 M14,383 V389" stroke="#111" stroke-width="0.9" fill="none"/>
<path d="M21,392 L30,383" stroke="#e02020" stroke-width="2.4"/><polygon points="26.5,380 31.5,379.5 31,384.5" fill="#e02020"/>
<rect x="46.8" y="367.5" width="26" height="25" fill="#fff" stroke="#1a1a6a" stroke-width="1.2"/><rect x="46.8" y="367.5" width="26" height="3.3" fill="#1a1a6a"/>
<line x1="49" y1="374.5" x2="70.5" y2="374.5" stroke="#222" stroke-width="0.9" stroke-dasharray="8 1 5 1"/>
<line x1="49" y1="377.4" x2="70.5" y2="377.4" stroke="#222" stroke-width="0.9" stroke-dasharray="8 1 5 1"/>
<line x1="49" y1="380.3" x2="70.5" y2="380.3" stroke="#222" stroke-width="0.9" stroke-dasharray="8 1 5 1"/>
<line x1="49" y1="383.2" x2="70.5" y2="383.2" stroke="#222" stroke-width="0.9" stroke-dasharray="8 1 5 1"/>
<line x1="49" y1="386.1" x2="70.5" y2="386.1" stroke="#222" stroke-width="0.9" stroke-dasharray="8 1 5 1"/>
<line x1="49" y1="389.0" x2="70.5" y2="389.0" stroke="#222" stroke-width="0.9" stroke-dasharray="8 1 5 1"/>
<rect x="86.5" y="367.5" width="27" height="27" fill="#111"/><rect x="91.5" y="368.5" width="16.5" height="11.5" fill="#e6e6e6"/><rect x="87.5" y="368.5" width="2.5" height="24" fill="#888"/><rect x="108" y="368.5" width="4.5" height="24" fill="#888"/><rect x="92" y="382" width="16" height="12" fill="#111"/><rect x="92.5" y="384.5" width="3.3" height="8.5" fill="#e6e6e6"/>
<rect x="7" y="408" width="5" height="22.5" fill="#2a40c0" stroke="#111" stroke-width="0.8"/><rect x="7.5" y="408.5" width="4" height="8" fill="#aaa"/>
<rect x="16.5" y="408.5" width="16.5" height="10.5" fill="#fff" stroke="#111" stroke-width="1"/><path d="M19,412 L23,416 M23,411 L24.5,416 M28,411 L25.5,416 M31,412 L26,416" stroke="#555" stroke-width="0.8"/><rect x="22" y="416.5" width="6" height="2" fill="#888"/>
<rect x="17" y="421.5" width="3.3" height="3.3" fill="#e0e060" stroke="#222" stroke-width="0.7"/>
<rect x="23" y="421.5" width="3.3" height="3.3" fill="#902040" stroke="#222" stroke-width="0.7"/>
<rect x="29" y="421.5" width="3.3" height="3.3" fill="#203080" stroke="#222" stroke-width="0.7"/>
<rect x="17" y="427.0" width="3.3" height="3.3" fill="#20a040" stroke="#222" stroke-width="0.7"/>
<rect x="23" y="427.0" width="3.3" height="3.3" fill="#e0e060" stroke="#222" stroke-width="0.7"/>
<rect x="29" y="427.0" width="3.3" height="3.3" fill="#20a040" stroke="#222" stroke-width="0.7"/>
<path d="M45.5,409 V406 Q45.5,405.5 46,405.5 H49 M48,411.5 V408.5 Q48,408 48.5,408 H51.5 M50.5,414 V411 Q50.5,410.5 51,410.5 H54" stroke="#222" stroke-width="1.1" fill="none"/>
<rect x="53.5" y="413.0" width="3.3" height="3.3" fill="#e0e060" stroke="#222" stroke-width="0.7"/>
<rect x="59.0" y="413.0" width="3.3" height="3.3" fill="#503030" stroke="#222" stroke-width="0.7"/>
<rect x="64.5" y="413.0" width="3.3" height="3.3" fill="#203080" stroke="#222" stroke-width="0.7"/>
<rect x="53.5" y="418.5" width="3.3" height="3.3" fill="#20a040" stroke="#222" stroke-width="0.7"/>
<rect x="59.0" y="418.5" width="3.3" height="3.3" fill="#e0e060" stroke="#222" stroke-width="0.7"/>
<rect x="64.5" y="418.5" width="3.3" height="3.3" fill="#20a040" stroke="#222" stroke-width="0.7"/>
<path d="M68,423.5 Q72,425 72.5,429" stroke="#d02020" stroke-width="1.6" fill="none"/><polygon points="69.5,428 75.5,428 72.5,432" fill="#d02020"/>
<path d="M99.5,430 L92,412 M99.5,430 L99.5,412 M99.5,430 L107,412" stroke="#111" stroke-width="1" fill="none"/><path d="M99.5,430 L87,418 M99.5,430 L99.5,418 M99.5,430 L111.5,418" stroke="#111" stroke-width="0.9" stroke-dasharray="1 1" fill="none"/>
<circle cx="92" cy="412" r="2.1" fill="#30d0d0" stroke="#111" stroke-width="0.7"/>
<circle cx="99.5" cy="412" r="2.1" fill="#30d0d0" stroke="#111" stroke-width="0.7"/>
<circle cx="107" cy="412" r="2.1" fill="#30d0d0" stroke="#111" stroke-width="0.7"/>
<circle cx="87" cy="418" r="2" fill="none" stroke="#111" stroke-width="0.8" stroke-dasharray="1 1"/>
<circle cx="99.5" cy="418" r="2" fill="none" stroke="#111" stroke-width="0.8" stroke-dasharray="1 1"/>
<circle cx="111.5" cy="418" r="2" fill="none" stroke="#111" stroke-width="0.8" stroke-dasharray="1 1"/>
<circle cx="99.5" cy="430.5" r="2.1" fill="#30d0d0" stroke="#111" stroke-width="0.7"/>
<path d="M87,411.5 L92,406 M106.5,406 L112,411.5" stroke="#e02020" stroke-width="1.4"/><polygon points="85.5,413 86.5,408.5 90,412" fill="#e02020"/><polygon points="93.5,405 89,405.5 92,409" fill="#e02020"/><polygon points="105,405 109.5,405.5 106.5,409" fill="#e02020"/><polygon points="113.5,413 112.5,408.5 109,412" fill="#e02020"/>
<line x1="24.3" y1="460.6" x2="32.8" y2="469.1" stroke="#111" stroke-width="4.2" stroke-linecap="square"/><line x1="24.3" y1="460.6" x2="32.8" y2="469.1" stroke="#707030" stroke-width="2.6"/>
<circle cx="17.3" cy="453.6" r="10.3" fill="#fafafa" stroke="#111" stroke-width="1.1" stroke-dasharray="1.5 0.6"/>
<rect x="11.5" y="447.5" width="11" height="11.5" fill="none" stroke="#e08030" stroke-width="0.9" stroke-dasharray="1.5 1"/><g fill="#111"><rect x="13" y="448.5" width="2" height="2"/><rect x="16.5" y="448.5" width="2" height="2"/><rect x="20" y="448.5" width="2" height="2"/><rect x="14.5" y="452" width="2" height="2"/><rect x="18" y="452" width="2" height="2"/></g><circle cx="17.3" cy="456.5" r="1.8" fill="#30d0e0"/>
<line x1="64.4" y1="460.6" x2="72.9" y2="469.1" stroke="#111" stroke-width="4.2" stroke-linecap="square"/><line x1="64.4" y1="460.6" x2="72.9" y2="469.1" stroke="#707030" stroke-width="2.6"/>
<circle cx="57.4" cy="453.6" r="10.3" fill="#fafafa" stroke="#111" stroke-width="1.1" stroke-dasharray="1.5 0.6"/>
<path d="M57.4,447 V460.5 M51,453.6 H64" stroke="#1a2a6a" stroke-width="2.2"/>
<line x1="104.6" y1="460.6" x2="113.1" y2="469.1" stroke="#111" stroke-width="4.2" stroke-linecap="square"/><line x1="104.6" y1="460.6" x2="113.1" y2="469.1" stroke="#707030" stroke-width="2.6"/>
<circle cx="97.6" cy="453.6" r="10.3" fill="#fafafa" stroke="#111" stroke-width="1.1" stroke-dasharray="1.5 0.6"/>
<path d="M91,453.6 H104" stroke="#1a2a6a" stroke-width="2.2"/>
<line x1="24.3" y1="498.7" x2="32.8" y2="507.2" stroke="#111" stroke-width="4.2" stroke-linecap="square"/><line x1="24.3" y1="498.7" x2="32.8" y2="507.2" stroke="#707030" stroke-width="2.6"/>
<circle cx="17.3" cy="491.7" r="10.3" fill="#fafafa" stroke="#111" stroke-width="1.1" stroke-dasharray="1.5 0.6"/>
<path d="M12.5,485 H19 L22.5,488.5 V497.5 H12.5 Z M19,485 V488.5 H22.5" fill="#fff" stroke="#111" stroke-width="1"/>
<path d="M49.5,482.5 H66.5 L70.8,486.8 V507.5 H49.5 Z" fill="#f6fafc" stroke="#111" stroke-width="1.1"/><path d="M66.5,482.5 V486.8 H70.8" fill="#fff" stroke="#111" stroke-width="0.9"/><rect x="50" y="507.5" width="21.5" height="1.2" fill="#555"/><rect x="70.8" y="487" width="1.2" height="21" fill="#555"/>
<g fill="#e02020"><polygon points="59.5,486 56,490 63,490"/><polygon points="59.5,504 56,500 63,500"/><polygon points="51.5,495 55.5,491.5 55.5,498.5"/><polygon points="68,495 64,491.5 64,498.5"/></g>
<line x1="107" y1="497" x2="114" y2="507" stroke="#111" stroke-width="4.2"/><line x1="107" y1="497" x2="114" y2="507" stroke="#707030" stroke-width="2.6"/>
<circle cx="103" cy="493.4" r="10.2" fill="#fafafa" stroke="#111" stroke-width="1.1" stroke-dasharray="1.5 0.6"/><rect x="96" y="487" width="15" height="13.5" fill="#f0f0a0" stroke="#111" stroke-width="0.8"/><text x="103.5" y="498.5" text-anchor="middle" style="font:11px 'Liberation Mono',monospace;fill:#111">BC</text><rect x="85.5" y="490" width="9" height="6.5" fill="#f8f8d0" stroke="#111" stroke-width="1"/><rect x="87.5" y="492" width="2" height="2" fill="#111"/>
<path d="M5.5,522 V542.8 H36" stroke="#111" stroke-width="1.2" fill="none"/><path d="M7,542 Q12,541 14,534 Q16.5,524 18.5,524 Q21,524 24,536 Q27,541 35,542 Z" fill="#102070"/>
<path d="M44.3,523 Q44.5,518 50,517.3 Q56,517 55.8,521.5 L55,525 L53,527.5 L52,529.8 L48,529.5 L47,527 Q44,526 44.3,523 Z" fill="#111"/>
<path d="M48.5,522.5 L51.5,521.2 L53.8,521.8 L53.2,525.5 L51,527.5 L49,527" fill="#f4f4f4"/>
<path d="M45,530.3 L47.5,528.5 M49,530.5 L50,529 M54.5,530.3 L52.5,528.5" stroke="#111" stroke-width="1.1"/>
<path d="M62.8,523 Q63.0,518 68.5,517.3 Q74.5,517 74.3,521.5 L73.5,525 L71.5,527.5 L70.5,529.8 L66.5,529.5 L65.5,527 Q62.5,526 62.8,523 Z" fill="#111"/>
<path d="M67.0,522.5 L70.0,521.2 L72.3,521.8 L71.7,525.5 L69.5,527.5 L67.5,527" fill="#f4f4f4"/>
<path d="M63.5,530.3 L66.0,528.5 M67.5,530.5 L68.5,529 M73.0,530.3 L71.0,528.5" stroke="#111" stroke-width="1.1"/>
<path d="M44.3,541 Q44.5,536 50,535.3 Q56,535 55.8,539.5 L55,543 L53,545.5 L52,547.8 L48,547.5 L47,545 Q44,544 44.3,541 Z" fill="#111"/>
<path d="M48.5,540.5 L51.5,539.2 L53.8,539.8 L53.2,543.5 L51,545.5 L49,545" fill="#f4f4f4"/>
<path d="M45,548.3 L47.5,546.5 M49,548.5 L50,547 M54.5,548.3 L52.5,546.5" stroke="#111" stroke-width="1.1"/>
<path d="M62.8,541 Q63.0,536 68.5,535.3 Q74.5,535 74.3,539.5 L73.5,543 L71.5,545.5 L70.5,547.8 L66.5,547.5 L65.5,545 Q62.5,544 62.8,541 Z" fill="#111"/>
<path d="M67.0,540.5 L70.0,539.2 L72.3,539.8 L71.7,543.5 L69.5,545.5 L67.5,545" fill="#f4f4f4"/>
<path d="M63.5,548.3 L66.0,546.5 M67.5,548.5 L68.5,547 M73.0,548.3 L71.0,546.5" stroke="#111" stroke-width="1.1"/>
<path d="M57,522.3 H62 M57,524.8 H62 M57,540.3 H62 M57,542.8 H62" stroke="#111" stroke-width="1.1"/>
<polygon points="84.5,530 97,522 115,526 103,534" fill="#f4f4f4" stroke="#444" stroke-width="0.9"/><polygon points="84.5,530 103,534 103,546 84.5,541" fill="#eee" stroke="#444" stroke-width="0.9"/><polygon points="103,534 115,526 115,538 103,546" fill="#999" stroke="#444" stroke-width="0.9"/><polygon points="95,529 101,518 111,520 105,531" fill="#fff" stroke="#333" stroke-width="0.9"/><path d="M100,522 L106,523 M99,524.5 L105,525.5 M98,527 L104,528" stroke="#30309a" stroke-width="0.9"/><rect x="88" y="532" width="10" height="7" fill="none" stroke="#777" stroke-width="0.8"/>
<path d="M14,571 L20,566 H25.5 L30,570 V574 L25,578.5" fill="none" stroke="#8a8a8a" stroke-width="2"/><polygon points="9,577 9,568 18,577" fill="#808080"/>
<path d="M67,571 L61,566 H55.5 L51,570 V574 L56,578.5" fill="none" stroke="#8a8a8a" stroke-width="2"/><polygon points="72,577 72,568 63,577" fill="#808080"/>
<path d="M90.2,557 H96.4 V563.5 H98.5 V569 H103.5 V563.5 H105.5 V557 H111.7 V563.5 H113.5 V569 H115.3 V582.7 H103.5 V575.5 H99 V582.7 H85.1 V569 H87.5 V563.5 H90.2 Z" fill="#111"/>
<g fill="#fff"><rect x="92.8" y="559" width="1.6" height="2"/><rect x="91.3" y="565" width="1.6" height="2"/><rect x="89.2" y="570.5" width="1.6" height="3.5"/><rect x="87" y="578" width="1.6" height="2.5"/><rect x="108" y="559" width="1.6" height="2"/><rect x="106.5" y="565" width="1.6" height="2"/><rect x="104.5" y="570.5" width="1.6" height="3.5"/><rect x="106.5" y="578" width="1.6" height="2.5"/></g>
<polygon points="5.9,600.5 13.3,593.8 13.3,607.2" fill="#000"/>
<polygon points="46,600.5 53.4,593.8 53.4,607.2" fill="#000"/>
<polygon points="85.7,600.5 93.10000000000001,593.8 93.10000000000001,607.2" fill="#000"/>
<rect x="166" y="49.5" width="37.5" height="73" fill="#eeede3"/><rect x="165" y="49" width="1.3" height="74" fill="#222"/><rect x="202.5" y="50" width="1.5" height="73" fill="#777"/><rect x="166" y="121.5" width="38" height="1.5" fill="#777"/>
<rect x="204.5" y="49.5" width="36" height="73" fill="#f5f5f0"/><rect x="239.6" y="49" width="1.5" height="74" fill="#111"/><rect x="204.5" y="49" width="36" height="1.2" fill="#999"/>
<rect x="170.5" y="54.5" width="29.0" height="25.0" fill="#f2fafc" stroke="#b02020" stroke-width="1" stroke-dasharray="2 1.5"/>
<line x1="176.3" y1="58.4" x2="176.3" y2="65.4" stroke="#111" stroke-width="1"/>
<line x1="176.3" y1="65.4" x2="184.8" y2="73.5" stroke="#111" stroke-width="1"/>
<rect x="173.60000000000002" y="56.6" width="5.4" height="3.6" rx="1.2" fill="#40e0d0" stroke="#111" stroke-width="0.9"/>
<rect x="173.60000000000002" y="63.60000000000001" width="5.4" height="3.6" rx="1.2" fill="#40e0d0" stroke="#111" stroke-width="0.9"/>
<line x1="184.8" y1="58.4" x2="184.8" y2="65.4" stroke="#111" stroke-width="1"/>
<line x1="184.8" y1="65.4" x2="184.8" y2="73.5" stroke="#111" stroke-width="1"/>
<rect x="182.10000000000002" y="56.6" width="5.4" height="3.6" rx="1.2" fill="#40e0d0" stroke="#111" stroke-width="0.9"/>
<rect x="182.10000000000002" y="63.60000000000001" width="5.4" height="3.6" rx="1.2" fill="#40e0d0" stroke="#111" stroke-width="0.9"/>
<line x1="193.3" y1="58.4" x2="193.3" y2="65.4" stroke="#111" stroke-width="1"/>
<line x1="193.3" y1="65.4" x2="184.8" y2="73.5" stroke="#111" stroke-width="1"/>
<rect x="190.60000000000002" y="56.6" width="5.4" height="3.6" rx="1.2" fill="#40e0d0" stroke="#111" stroke-width="0.9"/>
<rect x="190.60000000000002" y="63.60000000000001" width="5.4" height="3.6" rx="1.2" fill="#40e0d0" stroke="#111" stroke-width="0.9"/>
<circle cx="184.8" cy="73.5" r="3.6" fill="#40e0d0" stroke="#111" stroke-width="1"/><line x1="183.0" y1="73.5" x2="186.60000000000002" y2="73.5" stroke="#111" stroke-width="0.9"/>
<rect x="183" y="82" width="5.4" height="7" fill="#808080"/><polygon points="177,88.5 194,88.5 185.6,96.6" fill="#808080"/>
<rect x="171.5" y="100.5" width="27.0" height="19.0" fill="#f6f6f2" stroke="#8a8a8a" stroke-width="1.2"/>
<rect x="173.3" y="100.5" width="2.8" height="5.3" fill="#8a8a8a"/><rect x="174.1" y="100.5" width="1.2" height="19.0" fill="#8a8a8a"/><rect x="173.3" y="111.1" width="2.8" height="8.4" fill="#8a8a8a"/>
<rect x="178.4" y="100.5" width="2.8" height="5.3" fill="#8a8a8a"/><rect x="179.2" y="100.5" width="1.2" height="19.0" fill="#8a8a8a"/><rect x="178.4" y="111.1" width="2.8" height="8.4" fill="#8a8a8a"/>
<rect x="183.5" y="100.5" width="2.8" height="5.3" fill="#8a8a8a"/><rect x="184.3" y="100.5" width="1.2" height="19.0" fill="#8a8a8a"/><rect x="183.5" y="111.1" width="2.8" height="8.4" fill="#8a8a8a"/>
<rect x="188.6" y="100.5" width="2.8" height="5.3" fill="#8a8a8a"/><rect x="189.4" y="100.5" width="1.2" height="19.0" fill="#8a8a8a"/><rect x="188.6" y="111.1" width="2.8" height="8.4" fill="#8a8a8a"/>
<rect x="193.7" y="100.5" width="2.8" height="5.3" fill="#8a8a8a"/><rect x="194.5" y="100.5" width="1.2" height="19.0" fill="#8a8a8a"/><rect x="193.7" y="111.1" width="2.8" height="8.4" fill="#8a8a8a"/>
<rect x="209.5" y="55.5" width="29.0" height="43.5" fill="#f2fafc" stroke="#b02020" stroke-width="1" stroke-dasharray="2 1.5"/>
<line x1="215.5" y1="58.9" x2="215.5" y2="66.5" stroke="#111" stroke-width="1"/>
<line x1="215.5" y1="66.5" x2="224" y2="74.6" stroke="#111" stroke-width="1"/>
<rect x="212.8" y="57.1" width="5.4" height="3.6" rx="1.2" fill="#40e0d0" stroke="#111" stroke-width="0.9"/>
<rect x="212.8" y="64.7" width="5.4" height="3.6" rx="1.2" fill="#40e0d0" stroke="#111" stroke-width="0.9"/>
<line x1="224" y1="58.9" x2="224" y2="66.5" stroke="#111" stroke-width="1"/>
<line x1="224" y1="66.5" x2="224" y2="74.6" stroke="#111" stroke-width="1"/>
<rect x="221.3" y="57.1" width="5.4" height="3.6" rx="1.2" fill="#40e0d0" stroke="#111" stroke-width="0.9"/>
<rect x="221.3" y="64.7" width="5.4" height="3.6" rx="1.2" fill="#40e0d0" stroke="#111" stroke-width="0.9"/>
<line x1="232.5" y1="58.9" x2="232.5" y2="66.5" stroke="#111" stroke-width="1"/>
<line x1="232.5" y1="66.5" x2="224" y2="74.6" stroke="#111" stroke-width="1"/>
<rect x="229.8" y="57.1" width="5.4" height="3.6" rx="1.2" fill="#40e0d0" stroke="#111" stroke-width="0.9"/>
<rect x="229.8" y="64.7" width="5.4" height="3.6" rx="1.2" fill="#40e0d0" stroke="#111" stroke-width="0.9"/>
<circle cx="224" cy="74.6" r="3.6" fill="#40e0d0" stroke="#111" stroke-width="1"/><line x1="222.2" y1="74.6" x2="225.8" y2="74.6" stroke="#111" stroke-width="0.9"/>
<polygon points="224,82 215.5,90.2 232.5,90.2" fill="#8a0a0a"/><rect x="220.3" y="90" width="7.4" height="7.5" fill="#8a0a0a"/>
<rect x="210.5" y="101.5" width="27.0" height="19.0" fill="#f6f6f2" stroke="#8a8a8a" stroke-width="1.2"/>
<rect x="212.3" y="101.5" width="2.8" height="5.3" fill="#8a8a8a"/><rect x="213.1" y="101.5" width="1.2" height="19.0" fill="#8a8a8a"/><rect x="212.3" y="112.1" width="2.8" height="8.4" fill="#8a8a8a"/>
<rect x="217.4" y="101.5" width="2.8" height="5.3" fill="#8a8a8a"/><rect x="218.2" y="101.5" width="1.2" height="19.0" fill="#8a8a8a"/><rect x="217.4" y="112.1" width="2.8" height="8.4" fill="#8a8a8a"/>
<rect x="222.5" y="101.5" width="2.8" height="5.3" fill="#8a8a8a"/><rect x="223.3" y="101.5" width="1.2" height="19.0" fill="#8a8a8a"/><rect x="222.5" y="112.1" width="2.8" height="8.4" fill="#8a8a8a"/>
<rect x="227.6" y="101.5" width="2.8" height="5.3" fill="#8a8a8a"/><rect x="228.4" y="101.5" width="1.2" height="19.0" fill="#8a8a8a"/><rect x="227.6" y="112.1" width="2.8" height="8.4" fill="#8a8a8a"/>
<rect x="232.7" y="101.5" width="2.8" height="5.3" fill="#8a8a8a"/><rect x="233.5" y="101.5" width="1.2" height="19.0" fill="#8a8a8a"/><rect x="232.7" y="112.1" width="2.8" height="8.4" fill="#8a8a8a"/>
</svg>
<div class="abs" style="left:0;top:737px;width:1024px;height:5px;background:linear-gradient(#9BB8F0 0,#3A73DA 1px,#2F66D2 5px)"></div>
<div class="abs" style="left:0;top:737px;width:88px;height:5px;background:linear-gradient(#A8DCA8 0,#5BB35B 1px,#4FA84F 5px)"></div>
<div class="abs" style="left:906px;top:737px;width:118px;height:5px;background:linear-gradient(#80D8F8 0,#12A2E8 1px,#0F9AE0 5px)"></div>
</body></html>
